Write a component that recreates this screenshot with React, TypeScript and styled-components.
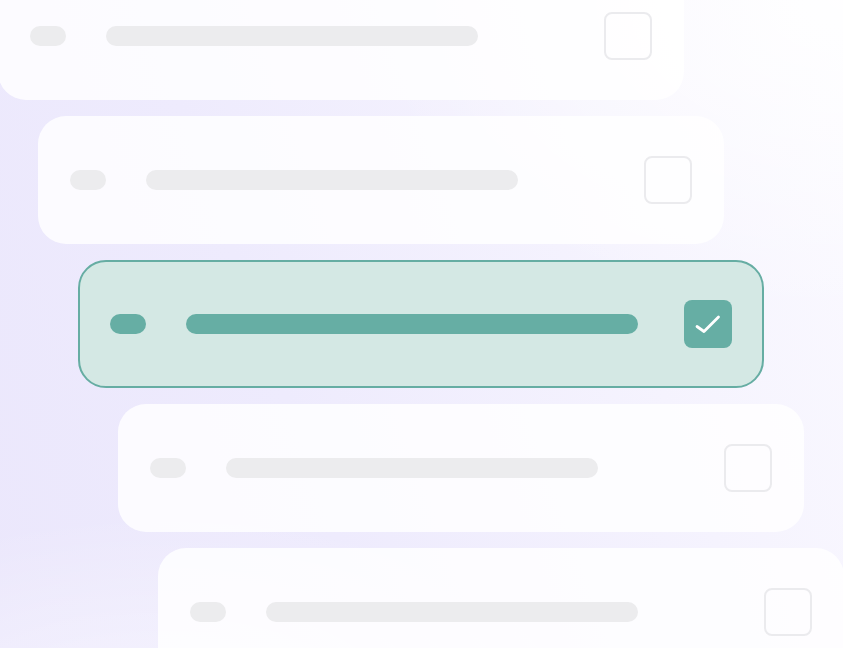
import styled, { createGlobalStyle } from 'styled-components';

const GlobalStyle = createGlobalStyle`
  html, body {
    margin: 0;
    padding: 0;
    height: 100%;
    overflow: hidden;
  }
  body {
    font-family: Inter, "Liberation Sans", sans-serif;
  }
`;

const Canvas = styled.div`
  width: 843px;
  height: 648px;
  overflow: hidden;
  background:
    radial-gradient(ellipse 480px 320px at 100% 0%, rgba(255, 255, 255, 0.9), rgba(255, 255, 255, 0) 100%),
    radial-gradient(ellipse 420px 200px at 20% 110%, rgba(255, 255, 255, 0.5), rgba(255, 255, 255, 0) 100%),
    linear-gradient(70deg, #ebe7fc 0%, #eeebfd 35%, #f5f3fe 70%, #fbfaff 100%);
`;

const List = styled.div`
  display: flex;
  flex-direction: column;
  gap: 16px;
  margin-top: -28px;
  margin-left: -2px;
`;

const Card = styled.div<{ $indent: number; $selected?: boolean }>`
  box-sizing: border-box;
  display: flex;
  align-items: center;
  flex-shrink: 0;
  width: 686px;
  height: 128px;
  margin-left: ${(p) => p.$indent * 40}px;
  padding: 0 30px;
  border-radius: 28px;
  background: ${(p) => (p.$selected ? '#d4e8e4' : 'rgba(255, 255, 255, 0.82)')};
  border: ${(p) => (p.$selected ? '2px solid #66ada3' : '2px solid transparent')};
`;

const ShortPill = styled.div<{ $selected?: boolean }>`
  width: 36px;
  height: 20px;
  border-radius: 10px;
  background: ${(p) => (p.$selected ? '#66aea4' : '#ececee')};
`;

const LongPill = styled.div<{ $selected?: boolean }>`
  width: ${(p) => (p.$selected ? 452 : 372)}px;
  height: 20px;
  margin-left: 40px;
  border-radius: 10px;
  background: ${(p) => (p.$selected ? '#66aea4' : '#ececee')};
`;

const Checkbox = styled.div<{ $checked?: boolean }>`
  box-sizing: border-box;
  display: flex;
  align-items: center;
  justify-content: center;
  width: 48px;
  height: 48px;
  margin-left: auto;
  border-radius: 8px;
  background: ${(p) => (p.$checked ? '#66aea4' : 'transparent')};
  border: ${(p) => (p.$checked ? 'none' : '2px solid #ebebee')};
`;

const CheckMark = () => (
  <svg width="48" height="48" viewBox="0 0 48 48" fill="none">
    <path
      d="M13 26.5 L20 31.5 L34.5 17"
      stroke="#ffffff"
      strokeWidth="2.8"
      strokeLinecap="round"
      strokeLinejoin="round"
    />
  </svg>
);

const rows = [false, false, true, false, false];

export default function App() {
  return (
    <>
      <GlobalStyle />
      <Canvas>
        <List>
          {rows.map((selected, i) => (
            <Card key={i} $indent={i} $selected={selected}>
              <ShortPill $selected={selected} />
              <LongPill $selected={selected} />
              <Checkbox $checked={selected}>{selected && <CheckMark />}</Checkbox>
            </Card>
          ))}
        </List>
      </Canvas>
    </>
  );
}
